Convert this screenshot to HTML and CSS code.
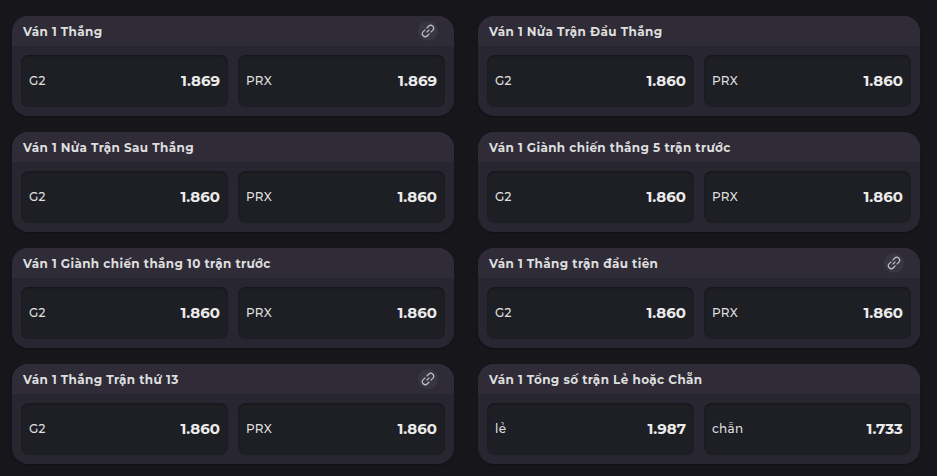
FILE: index.html
```html
<!DOCTYPE html>
<html lang="vi">
<head>
<meta charset="utf-8">
<title>Ván 1</title>
<link rel="stylesheet" href="styles.css">
</head>
<body>
<svg class="defs" width="0" height="0" aria-hidden="true">
  <symbol id="link" viewBox="0 0 24 24">
    <g transform="rotate(-45 12 12)">
      <path d="M10.500 17H5.500A5 5 0 0 1 5.500 7h5M13.500 7h5a5 5 0 0 1 0 10h-5M8.500 12h7"/>
    </g>
  </symbol>
</svg>
<main class="markets">
  <section class="card">
    <header class="card-head"><h2>Ván 1 Thắng</h2><span class="badge"><svg><use href="#link"/></svg></span></header>
    <div class="odds"><div class="odd"><span>G2</span><b>1.869</b></div><div class="odd"><span>PRX</span><b>1.869</b></div></div>
  </section>
  <section class="card">
    <header class="card-head"><h2>Ván 1 Nửa Trận Đầu Thắng</h2></header>
    <div class="odds"><div class="odd"><span>G2</span><b>1.860</b></div><div class="odd"><span>PRX</span><b>1.860</b></div></div>
  </section>
  <section class="card">
    <header class="card-head"><h2>Ván 1 Nửa Trận Sau Thắng</h2></header>
    <div class="odds"><div class="odd"><span>G2</span><b>1.860</b></div><div class="odd"><span>PRX</span><b>1.860</b></div></div>
  </section>
  <section class="card">
    <header class="card-head"><h2>Ván 1 Giành chiến thắng 5 trận trước</h2></header>
    <div class="odds"><div class="odd"><span>G2</span><b>1.860</b></div><div class="odd"><span>PRX</span><b>1.860</b></div></div>
  </section>
  <section class="card">
    <header class="card-head"><h2>Ván 1 Giành chiến thắng 10 trận trước</h2></header>
    <div class="odds"><div class="odd"><span>G2</span><b>1.860</b></div><div class="odd"><span>PRX</span><b>1.860</b></div></div>
  </section>
  <section class="card">
    <header class="card-head"><h2>Ván 1 Thắng trận đầu tiên</h2><span class="badge"><svg><use href="#link"/></svg></span></header>
    <div class="odds"><div class="odd"><span>G2</span><b>1.860</b></div><div class="odd"><span>PRX</span><b>1.860</b></div></div>
  </section>
  <section class="card">
    <header class="card-head"><h2>Ván 1 Thắng Trận thứ 13</h2><span class="badge"><svg><use href="#link"/></svg></span></header>
    <div class="odds"><div class="odd"><span>G2</span><b>1.860</b></div><div class="odd"><span>PRX</span><b>1.860</b></div></div>
  </section>
  <section class="card">
    <header class="card-head"><h2>Ván 1 Tổng số trận Lẻ hoặc Chẵn</h2></header>
    <div class="odds"><div class="odd"><span>lẻ</span><b>1.987</b></div><div class="odd"><span>chẵn</span><b>1.733</b></div></div>
  </section>
</main>
</body>
</html>
```
FILE: styles.css
```css
* { box-sizing: border-box; }
body {
  margin: 0;
  height: 476px;
  overflow: hidden;
  background: #17161b;
  color: #dedede;
  font-family: Montserrat, Inter, sans-serif;
}
.defs { display: none; }
.markets {
  display: grid;
  grid-template-columns: 442px 442px;
  grid-auto-rows: 100px;
  gap: 16px 24px;
  padding: 16px 12px 12px;
}
.card {
  border-radius: 16px;
  overflow: hidden;
  background: #282630;
  box-shadow: 0 1px 2px rgba(0, 0, 0, .3);
}
.card-head {
  display: flex;
  align-items: center;
  justify-content: space-between;
  height: 30px;
  padding: 0 16px 0 11px;
  background: #2f2c38;
}
h2 {
  margin: 0;
  padding-top: 1px;
  font-size: 12px;
  font-weight: 700;
  line-height: 30px;
  letter-spacing: .38px;
  white-space: nowrap;
}
.badge {
  display: flex;
  align-items: center;
  justify-content: center;
  width: 20px;
  height: 20px;
  border-radius: 50%;
  background: #393644;
}
.badge svg {
  width: 14px;
  height: 14px;
  fill: none;
  stroke: #c3c3c9;
  stroke-width: 2;
}
.odds {
  display: grid;
  grid-template-columns: 1fr 1fr;
  gap: 10px;
  padding: 9px;
}
.odd {
  display: flex;
  align-items: center;
  justify-content: space-between;
  height: 52px;
  padding: 0 8px;
  border-radius: 8px;
  background: #1e1e25;
  box-shadow: inset 0 1px 2px rgba(0, 0, 0, .35);
}
.odd span { padding-bottom: 2px; font-size: 12px; font-weight: 500; letter-spacing: .3px; }
.odd b { padding-bottom: 2px; font-size: 15px; font-weight: 700; color: #ebebeb; }
```
